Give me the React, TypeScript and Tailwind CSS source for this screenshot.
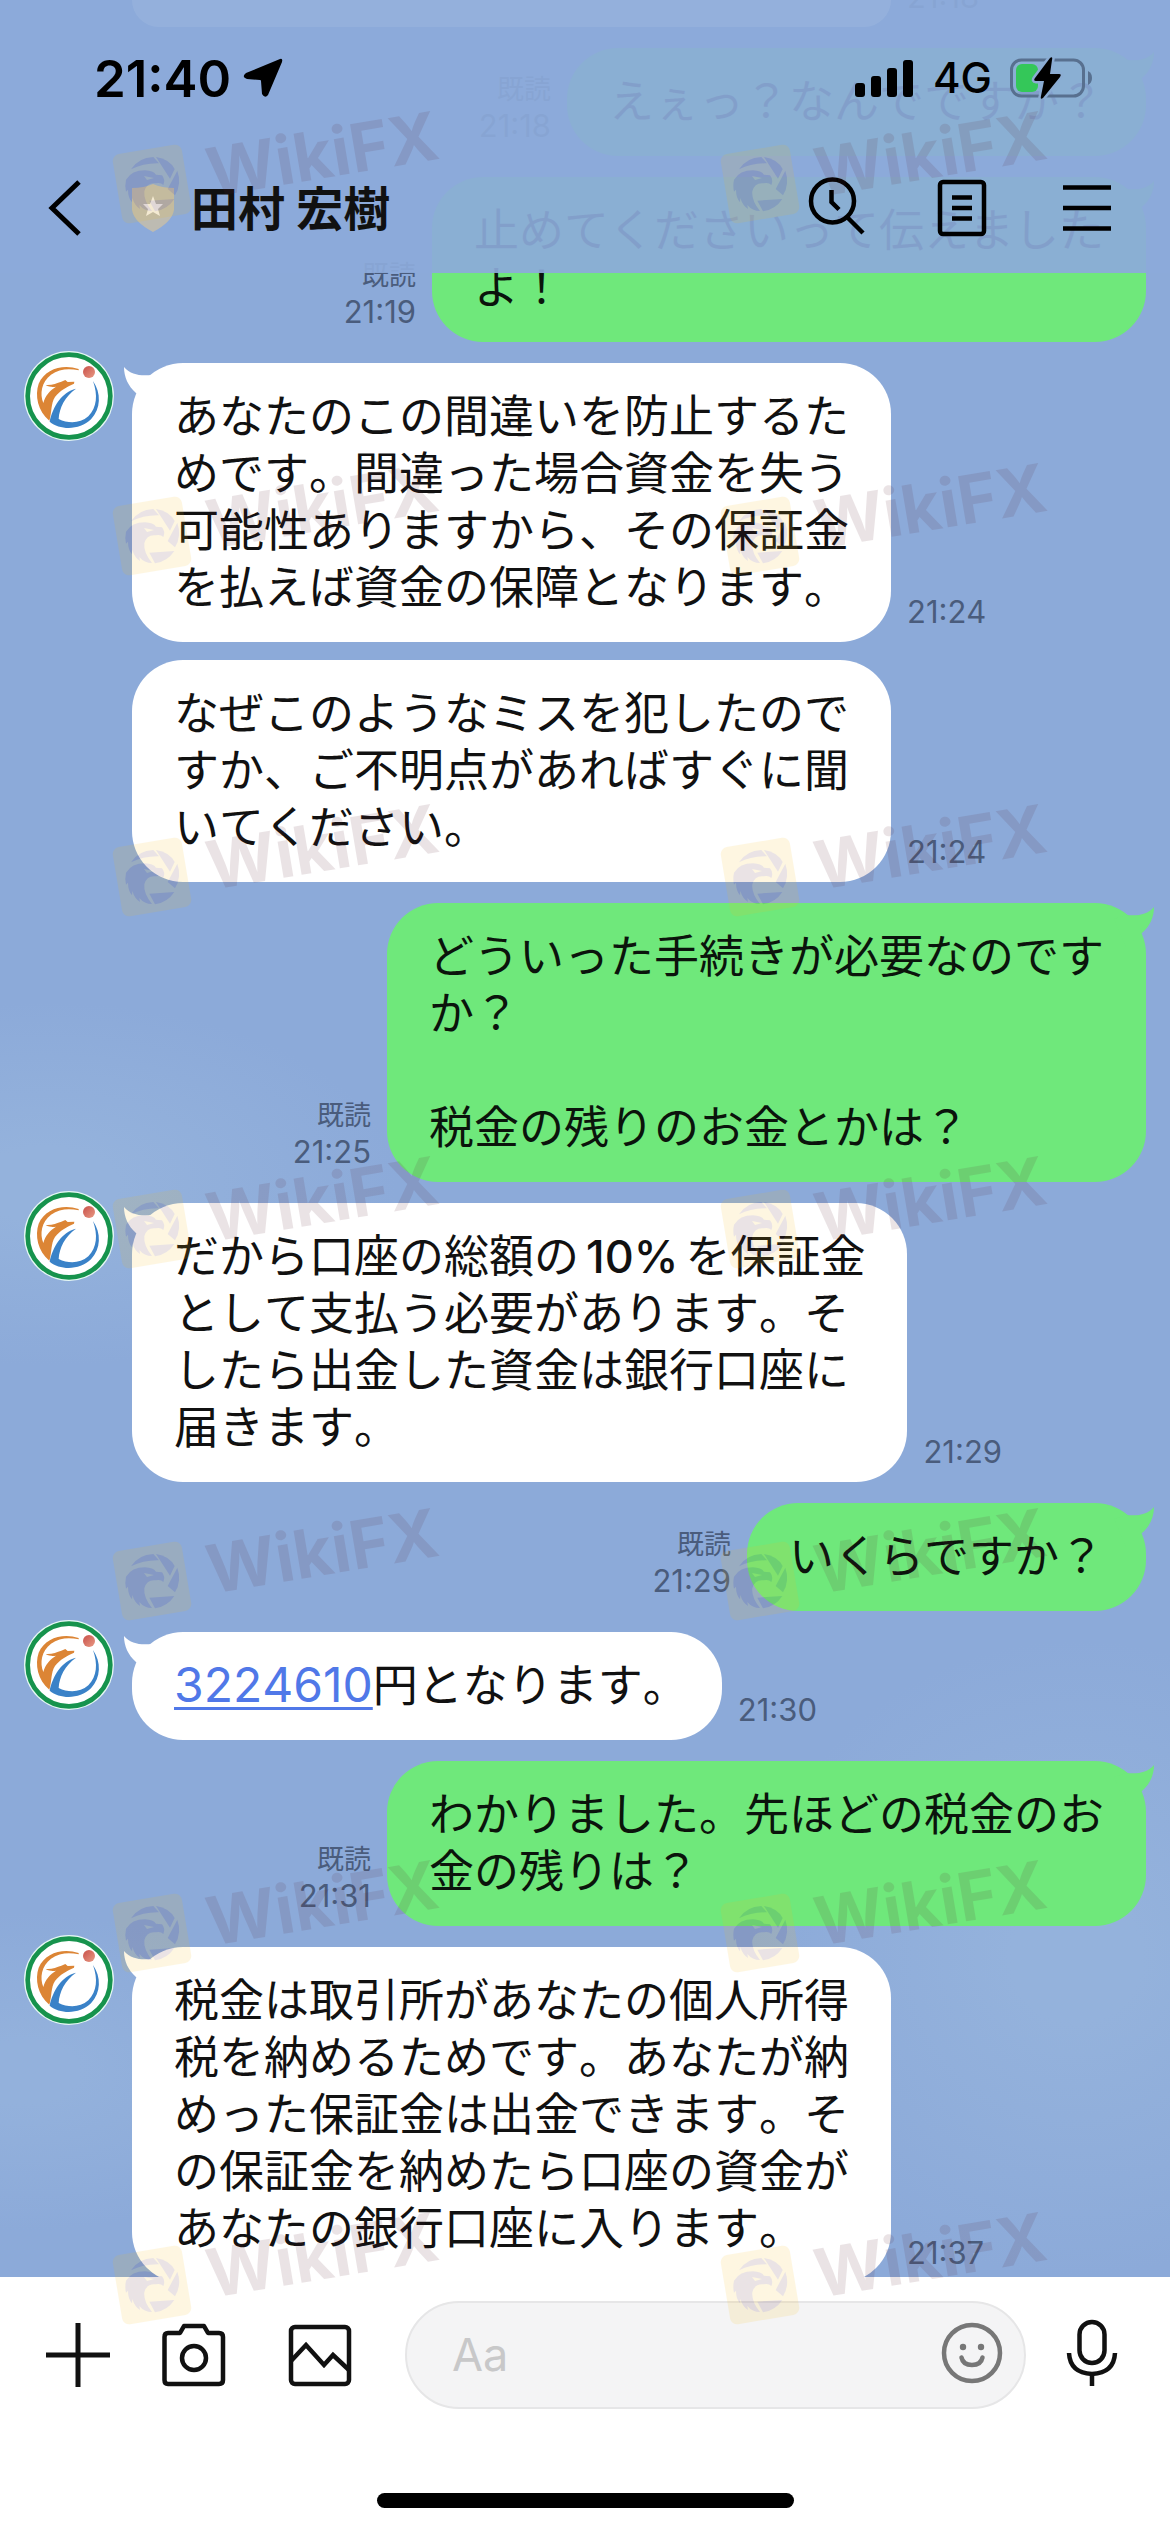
import React from "react";

type Message = {
  from: "me" | "them";
  text: React.ReactNode;
  time: string;
  avatar?: boolean;
  tight?: boolean;
};

const messages: Message[] = [
  { from: "me", text: "えぇっ？なんでですか？", time: "21:18" },
  { from: "me", text: "止めてくださいって伝えました\nよ！", time: "21:19" },
  {
    from: "them",
    text: "あなたのこの間違いを防止するた\nめです。間違った場合資金を失う\n可能性ありますから、その保証金\nを払えば資金の保障となります。",
    time: "21:24",
    avatar: true,
  },
  {
    from: "them",
    text: "なぜこのようなミスを犯したので\nすか、ご不明点があればすぐに聞\nいてください。",
    time: "21:24",
    tight: true,
  },
  {
    from: "me",
    text: "どういった手続きが必要なのです\nか？\n\n税金の残りのお金とかは？",
    time: "21:25",
  },
  {
    from: "them",
    text: (
      <>
        だから口座の総額の<span className="mx-[7px] font-medium">10%</span>
        {"を保証金\nとして支払う必要があります。そ\nしたら出金した資金は銀行口座に\n届きます。"}
      </>
    ),
    time: "21:29",
    avatar: true,
  },
  { from: "me", text: "いくらですか？", time: "21:29" },
  {
    from: "them",
    text: (
      <>
        <a
          href="tel:3224610"
          className="text-[48px] leading-none text-[#5078e8] underline decoration-[3px] underline-offset-[5px]"
        >
          3224610
        </a>
        <span className="-mr-2">円となります。</span>
      </>
    ),
    time: "21:30",
    avatar: true,
  },
  { from: "me", text: "わかりました。先ほどの税金のお\n金の残りは？", time: "21:31" },
  {
    from: "them",
    text: "税金は取引所があなたの個人所得\n税を納めるためです。あなたが納\nめった保証金は出金できます。そ\nの保証金を納めたら口座の資金が\nあなたの銀行口座に入ります。",
    time: "21:37",
    avatar: true,
  },
];

function Avatar() {
  return (
    <svg viewBox="72 32 270 270" className="h-[90px] w-[90px]" role="img" aria-label="田村 宏樹">
      <defs>
        <linearGradient id="dot" x1="0" y1="0" x2="1" y2="1">
          <stop offset="0" stopColor="#c9504a" />
          <stop offset="1" stopColor="#e89a84" />
        </linearGradient>
      </defs>
      <circle cx="207" cy="167" r="135" fill="#e6f8f4" />
      <circle cx="207" cy="167" r="124" fill="#fff" stroke="#16934d" strokeWidth="14" />
      <path
        d="M236 86C190 70 135 85 116 130C104 165 113 212 148 241C156 215 152 190 165 170C180 150 200 140 222 130L223 124L203 125L196 119L184 124C170 128 155 136 137 134C148 141 160 140 168 139C150 150 136 165 130 188C119 160 124 126 153 103C178 85 208 84 236 90Z"
        fill="#dc8535"
      />
      <path
        d="M228 145C185 155 158 200 149 244C180 270 240 270 273 237C303 205 304 158 279 122C294 165 291 200 265 228C240 250 205 250 176 236C178 202 195 168 228 145Z"
        fill="#3a82c8"
      />
      <circle cx="267" cy="95" r="18" fill="url(#dot)" />
    </svg>
  );
}

function Tail({ mine }: { mine: boolean }) {
  return (
    <svg
      viewBox="0 0 40 40"
      aria-hidden="true"
      className={
        mine
          ? "absolute top-1 -right-2 h-10 w-10 -scale-x-100 fill-[#6fe87b]"
          : "absolute top-1 -left-2 h-10 w-10 fill-white"
      }
    >
      <path d="M0 0C7 8 16 9 28 8L40 12L28 40L12 26C4 19 0 10 0 0Z" />
    </svg>
  );
}

function MessageRow({ message }: { message: Message }) {
  const mine = message.from === "me";
  const meta = (
    <div className="mb-3 text-right text-[27px] leading-9 text-[#4a5c7c]">
      {mine && <div>既読</div>}
      <time className="block text-[31px] leading-9">{message.time}</time>
    </div>
  );
  const bubble = (
    <div
      className={
        mine
          ? "relative rounded-[51px] bg-[#6fe87b] px-[42px] pt-[25px] pb-[26px] text-[45px] leading-[57px] whitespace-pre text-[#0b140c]"
          : "relative rounded-[51px] bg-white px-[42px] pt-[25px] pb-[26px] text-[45px] leading-[57px] whitespace-pre text-[#111]"
      }
    >
      {(mine || message.avatar) && <Tail mine={mine} />}
      {message.text}
    </div>
  );
  if (mine) {
    return (
      <li className="mt-[21px] flex items-end justify-end gap-4 pr-6">
        {meta}
        {bubble}
      </li>
    );
  }
  return (
    <li className={message.tight ? "mt-[18px] flex gap-[18px] pl-6" : "mt-[21px] flex gap-[18px] pl-6"}>
      <div className="-mt-3 w-[90px] shrink-0">{message.avatar && <Avatar />}</div>
      <div className="flex items-end gap-4">
        {bubble}
        {meta}
      </div>
    </li>
  );
}

function Watermark() {
  return (
    <svg viewBox="0 0 340 116" className="h-[116px] w-[340px] opacity-[0.12]">
      <rect x="5" y="39" width="70" height="70" rx="7" fill="#f7bd14" transform="rotate(-9.5 40 74)" />
      <g transform="scale(.33333) translate(-36 -81)" fill="#5a2332">
        <path d="M93 259Q115 224 160 222L177 241Q130 240 93 259Z" />
        <path d="M168 222Q208 228 224 258L210 287Z" />
        <path d="M232 263Q246 302 225 337L203 318Z" />
        <path d="M148 353L223 348Q202 380 165 385Z" />
        <path d="M78 290Q95 262 135 262Q160 263 168 275L186 277Q197 290 190 306Q182 297 167 301Q140 298 133 325Q130 352 156 384Q133 384 118 366L120 378Q104 368 97 345L96 358Q84 344 84 320L78 326Q74 308 78 290Z" />
      </g>
      <path d="M32 66L42 68L35 70Z" fill="#f7bd14" />
      <text
        x="0"
        y="0"
        transform="translate(99 87) rotate(-9.5)"
        fill="#5a2332"
        className="font-['Inter'] text-[67px] font-bold"
      >
        WikiFX
      </text>
    </svg>
  );
}

const watermarkRows = [
  "h-[352px]",
  "h-[341px]",
  "h-[352px]",
  "h-[352px]",
  "h-[352px]",
  "h-[352px]",
  "h-[120px]",
];

function WatermarkLayer() {
  return (
    <div
      aria-hidden="true"
      className="pointer-events-none absolute inset-0 z-20 flex flex-col overflow-hidden pt-[110px] pl-28"
    >
      {watermarkRows.map((height, i) => (
        <div key={i} className={`grid shrink-0 grid-cols-[608px_1fr] ${height}`}>
          <Watermark />
          <Watermark />
        </div>
      ))}
    </div>
  );
}

function StatusBar() {
  return (
    <div className="flex h-[156px] items-center justify-between pr-[78px] pl-[94px] text-black">
      <div className="flex items-center gap-3">
        <time className="text-[51px] leading-none font-semibold">21:40</time>
        <svg viewBox="0 0 40 40" className="h-10 w-10" aria-label="位置情報">
          <path d="M37 1Q40 0 39 4L25 37Q22 41 19 36L18 23Q18 22 17 22L4 21Q-2 19 3 15Z" />
        </svg>
      </div>
      <div className="flex items-center gap-[18px]">
        <svg viewBox="0 0 60 38" className="h-[38px] w-[60px]" aria-label="電波">
          <rect x="0" y="24" width="10" height="14" rx="3" />
          <rect x="16" y="17" width="10" height="21" rx="3" />
          <rect x="32" y="9" width="10" height="29" rx="3" />
          <rect x="48" y="1" width="10" height="37" rx="3" />
        </svg>
        <span className="text-[42px] leading-none font-medium">4G</span>
        <svg viewBox="0 0 82 42" className="h-[42px] w-[82px]" aria-label="充電中">
          <rect x="1.5" y="3" width="72" height="36" rx="10" fill="none" stroke="#58708f" strokeWidth="3" />
          <path d="M78 14Q82 16 82 21Q82 26 78 28Z" fill="#58708f" />
          <rect x="6" y="7" width="22" height="28" rx="6" fill="#34c759" />
          <path
            d="M40 1Q43 -1 42 3L40 17L49 17Q52 17 50 20L33 41Q30 43 31 39L34 24L26 24Q23 24 25 21Z"
            stroke="#8bacd3"
            strokeWidth="5"
            paintOrder="stroke"
          />
        </svg>
      </div>
    </div>
  );
}

function Header() {
  return (
    <header className="absolute inset-x-0 top-0 z-10 bg-[#8caad9]/93">
      <StatusBar />
      <div className="flex h-[104px] items-center pr-[51px] pl-[48px]">
        <button aria-label="戻る">
          <svg viewBox="0 0 33 56" className="h-14 w-[33px]" fill="none" stroke="#000" strokeWidth="5">
            <path d="M31 2L4 28L31 54" />
          </svg>
        </button>
        <svg viewBox="0 0 42 48" className="ml-[51px] h-12 w-[42px]" aria-label="認証済み">
          <path d="M0 4Q12 4 21 0Q30 4 42 4V26Q40 38 21 48Q2 38 0 26Z" fill="#bdbbb2" />
          <path d="M21 12L24 20L31 20L26 25L28 32L21 28L14 32L16 25L11 20L18 20Z" fill="#f4f1ee" />
        </svg>
        <h1 className="ml-[17px] flex-1 text-[47px] leading-none font-bold text-[#111]">田村 宏樹</h1>
        <div className="flex gap-[61px]">
          <button aria-label="検索">
            <svg viewBox="0 0 64 64" className="h-16 w-16" fill="none" stroke="#000" strokeWidth="4.5">
              <circle cx="27.5" cy="25" r="21.5" />
              <path d="M26.5 14V26L34 33.5M42 41L58 57" />
            </svg>
          </button>
          <button aria-label="ノート">
            <svg viewBox="0 0 64 64" className="h-16 w-16" fill="none" stroke="#000" strokeWidth="4.5">
              <rect x="10" y="6" width="44" height="52" rx="3" />
              <path d="M22 21.5H42M22 32H42M22 42.5H42" />
            </svg>
          </button>
          <button aria-label="メニュー">
            <svg viewBox="0 0 64 64" className="h-16 w-16" fill="none" stroke="#000" strokeWidth="4.5">
              <path d="M8 11.5H56M8 32H56M8 52.5H56" />
            </svg>
          </button>
        </div>
      </div>
      <div className="h-[13px]" />
    </header>
  );
}

function Composer() {
  return (
    <footer className="relative shrink-0 bg-white pt-6 pb-6">
      <form className="flex items-center pr-[46px] pl-[46px]" onSubmit={(e) => e.preventDefault()}>
        <button type="button" aria-label="追加">
          <svg viewBox="0 0 64 64" className="h-16 w-16" fill="none" stroke="#111" strokeWidth="5">
            <path d="M32 0V64M0 32H64" />
          </svg>
        </button>
        <button type="button" aria-label="カメラ" className="ml-[52px]">
          <svg
            viewBox="0 0 64 64"
            className="h-16 w-16"
            fill="none"
            stroke="#111"
            strokeWidth="4.5"
            strokeLinejoin="round"
          >
            <path d="M6 10H18L22 3H42L46 10H57Q61 10 61 14V57Q61 61 57 61H6Q2.5 61 2.5 57V14Q2.5 10 6 10Z" />
            <circle cx="32" cy="35" r="12" />
          </svg>
        </button>
        <button type="button" aria-label="写真" className="ml-[62px]">
          <svg viewBox="0 0 64 64" className="h-16 w-16" fill="none" stroke="#111" strokeWidth="4.5">
            <rect x="3" y="4" width="58" height="57" rx="4" />
            <path d="M3 38L18 22L36 42L45 32L61 47" />
          </svg>
        </button>
        <div className="ml-[53px] flex h-[108px] min-w-0 flex-1 items-center rounded-full border-2 border-[#e6e6e7] bg-[#f4f4f5] pr-[21px] pl-[45px]">
          <input
            type="text"
            aria-label="メッセージ"
            placeholder="Aa"
            className="min-w-0 flex-1 bg-transparent text-[45px] outline-none placeholder:text-[#c8c8c9]"
          />
          <button type="button" aria-label="スタンプ">
            <svg viewBox="0 0 62 62" className="mb-1 h-[62px] w-[62px]" fill="none" stroke="#777" strokeWidth="4.5">
              <circle cx="31" cy="31" r="28" />
              <path d="M20.5 35.5Q22 43 31 43Q40 43 41.5 35.5" strokeLinecap="round" />
              <circle cx="22" cy="25" r="3.2" fill="#777" stroke="none" />
              <circle cx="40" cy="25" r="3.2" fill="#777" stroke="none" />
            </svg>
          </button>
        </div>
        <button type="button" aria-label="音声" className="ml-[34px]">
          <svg viewBox="0 0 64 68" className="mb-1 h-[68px] w-16" fill="none" stroke="#111" strokeWidth="4.5">
            <rect x="19.5" y="3" width="25" height="41" rx="12.5" />
            <path d="M9 34Q10 54 32 55Q54 54 55 34M32 55V67" />
          </svg>
        </button>
      </form>
      <div className="mx-auto mt-[84px] h-[15px] w-[417px] rounded-full bg-black" />
    </footer>
  );
}

export default function App() {
  return (
    <div
      lang="ja"
      className="relative flex h-screen flex-col overflow-hidden bg-white font-['Inter','Noto_Sans_CJK_JP',sans-serif] [font-kerning:none]"
    >
      <Header />
      <main className="min-h-0 flex-1 overflow-hidden bg-[#8caad9] bg-[radial-gradient(ellipse_30%_8%_at_4%_52%,#94b2dc_20%,transparent),radial-gradient(ellipse_28%_14%_at_92%_86%,#94b2dc_20%,transparent),radial-gradient(ellipse_24%_7%_at_2%_91%,#93b1dc_20%,transparent)]">
        <ul>
          <li className="flex items-end gap-4 pl-[132px]">
            <div className="h-[27px] w-[759px] rounded-b-[51px] bg-white" />
            <time className="-mt-6 mb-3 text-[31px] leading-9 text-[#4a5c7c]">21:18</time>
          </li>
          {messages.map((message, i) => (
            <MessageRow key={i} message={message} />
          ))}
        </ul>
      </main>
      <Composer />
      <WatermarkLayer />
    </div>
  );
}
